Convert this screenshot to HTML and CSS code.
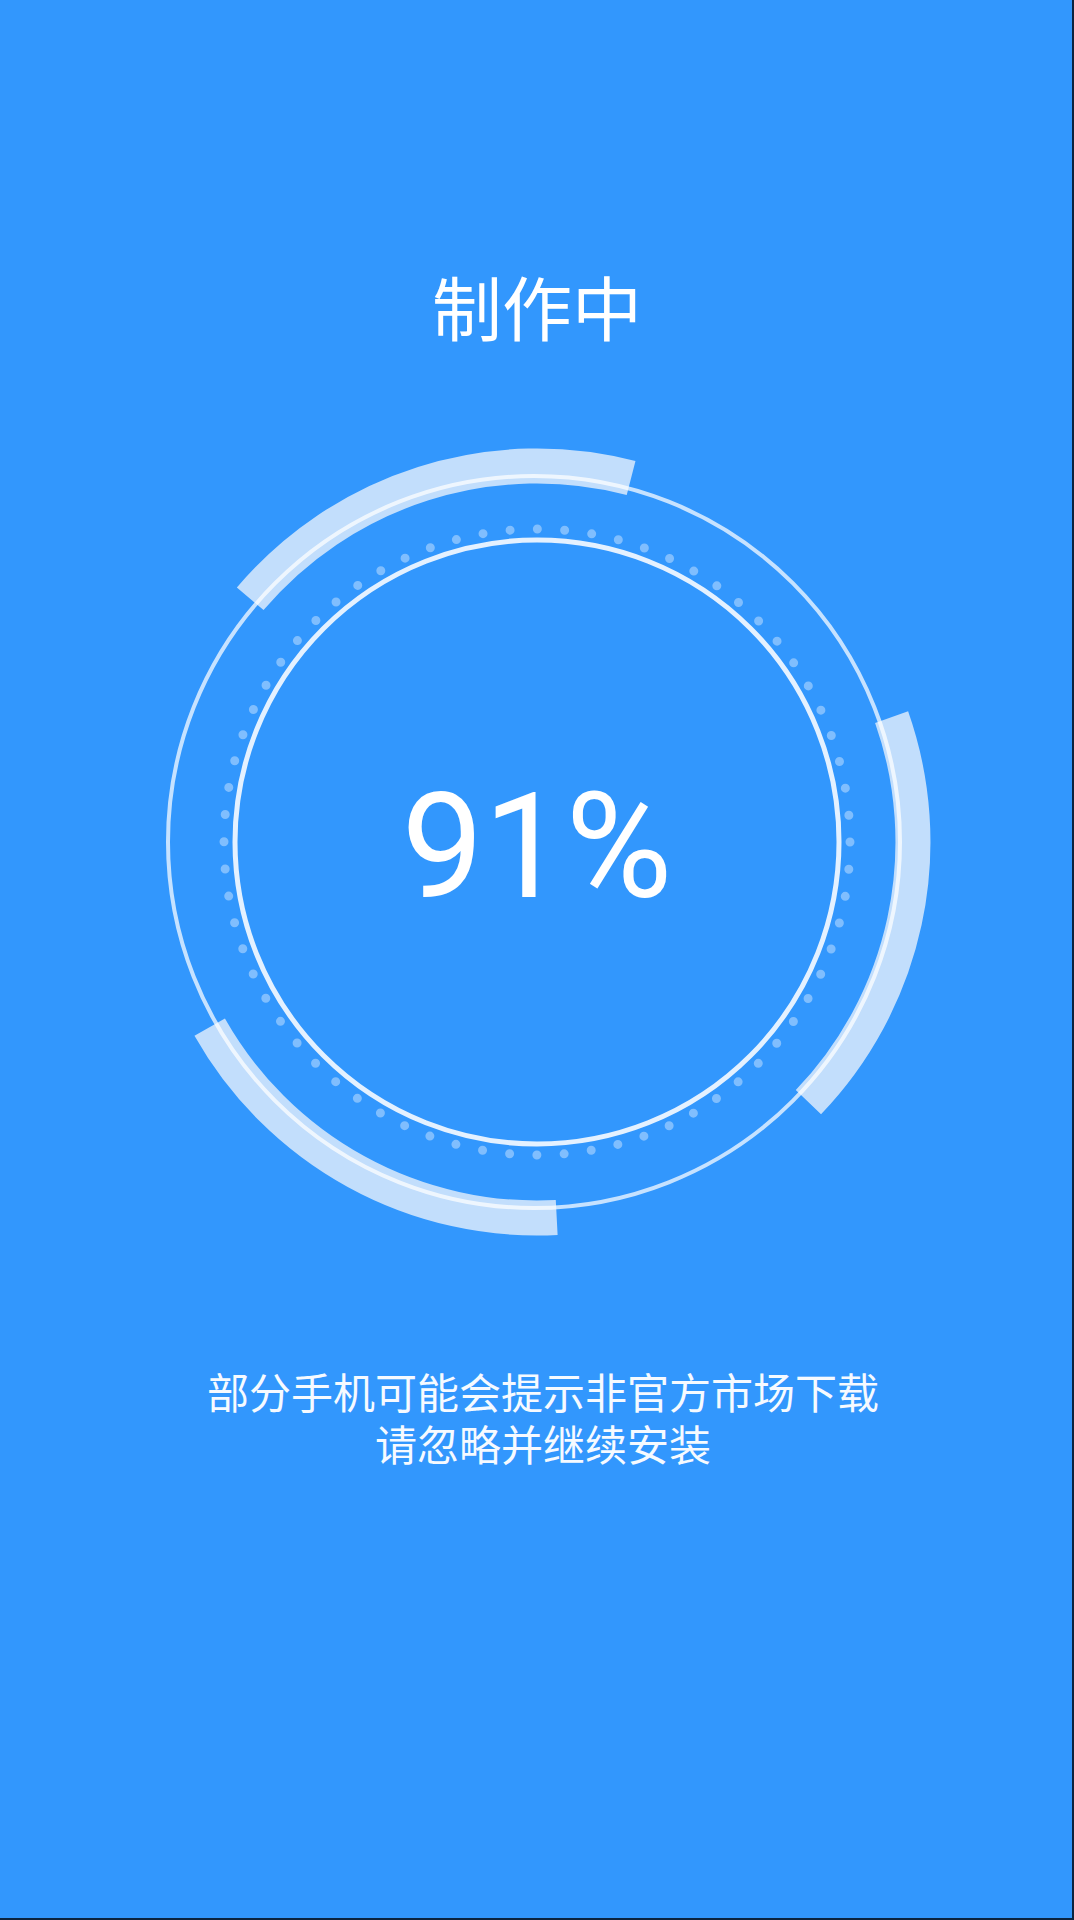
FILE: index.html
```html
<!DOCTYPE html>
<html lang="zh-CN">
<head>
<meta charset="utf-8">
<title>制作中</title>
<link rel="stylesheet" href="styles.css">
</head>
<body>
<div class="screen">
  <h1 class="title">制作中</h1>
  <div class="gauge">
    <svg class="rings" viewBox="0 0 820 820" width="820" height="820" aria-hidden="true">
      <path class="band" d="M 504.1 46.0 A 376 376 0 0 0 123.2 166.8"/>
      <path class="band" d="M 764.6 285.1 A 376 376 0 0 1 681.4 670.2"/>
      <path class="band" d="M 82.7 595.1 A 376 376 0 0 0 429.7 785.5"/>
      <circle class="outer" cx="407" cy="410" r="366"/>
      <circle class="dots" cx="410" cy="410" r="313"/>
      <circle class="inner" cx="410" cy="410" r="302"/>
    </svg>
    <div class="percent">91%</div>
  </div>
  <div class="notice">
    <p class="notice-line">部分手机可能会提示非官方市场下载</p>
    <p class="notice-line">请忽略并继续安装</p>
  </div>
</div>
</body>
</html>
```
FILE: styles.css
```css
html, body {
  margin: 0;
  padding: 0;
  background: #3297fd;
}

.screen {
  width: 1074px;
  height: 1920px;
  box-sizing: border-box;
  padding-top: 266px;
  background: #3297fd;
  display: flex;
  flex-direction: column;
  align-items: center;
  box-shadow: inset -2px -2px 0 #0b2440;
  color: #ffffff;
}

.title {
  margin: 0;
  font-family: "Noto Sans CJK SC", "Noto Sans", sans-serif;
  font-weight: 400;
  font-size: 70px;
  line-height: 80px;
}

.gauge {
  margin-top: 86px;
  width: 820px;
  height: 820px;
  display: grid;
  place-items: center;
}

.rings,
.percent {
  grid-area: 1 / 1;
}

.rings {
  display: block;
  fill: none;
}

.band {
  fill: none;
  stroke: #c2defc;
  stroke-width: 35;
}

.outer {
  fill: none;
  stroke: rgba(255, 255, 255, 0.72);
  stroke-width: 4;
}

.dots {
  fill: none;
  stroke: rgba(255, 255, 255, 0.38);
  stroke-width: 9;
  stroke-linecap: round;
  stroke-dasharray: 0 27.31;
}

.inner {
  fill: none;
  stroke: #e4f1ff;
  stroke-width: 5;
}

.percent {
  padding-top: 12px;
  font-family: Roboto, "Noto Sans", sans-serif;
  font-weight: 400;
  font-size: 146px;
  line-height: 1;
}

.notice {
  margin-top: 113px;
  padding-left: 12px;
  display: flex;
  flex-direction: column;
  align-items: center;
  font-family: "Noto Sans CJK SC", "Noto Sans", sans-serif;
  font-size: 42px;
  line-height: 52px;
  color: #f6faff;
}

.notice-line {
  margin: 0;
}
```
